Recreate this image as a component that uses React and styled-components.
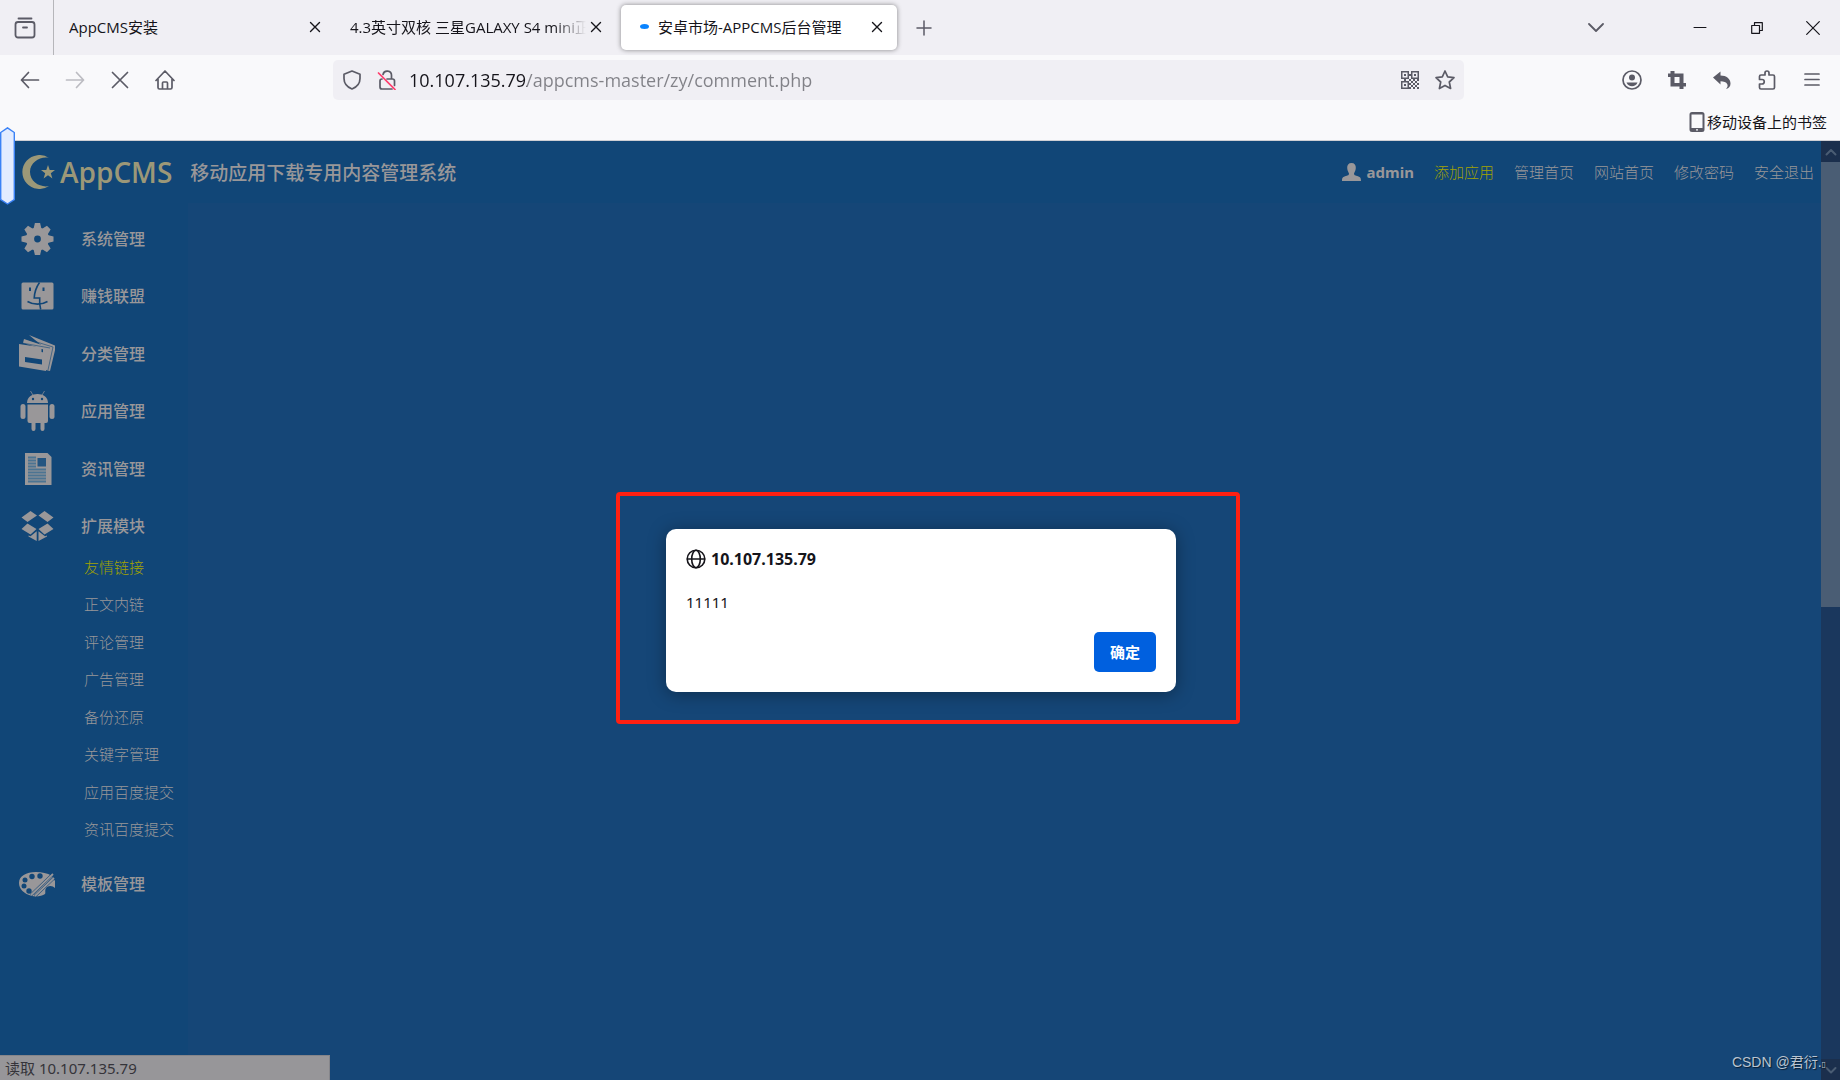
import React from "react";
import styled, { createGlobalStyle } from "styled-components";

const GlobalStyle = createGlobalStyle`
  * {
    box-sizing: border-box;
  }
  body {
    margin: 0;
    font-family: "Noto Sans", "Noto Sans CJK SC", sans-serif;
    color: #15141a;
  }
  button, input {
    font-family: inherit;
  }
`;

const Window = styled.div`
  display: flex;
  flex-direction: column;
  min-height: 100vh;
  background: #f9f9fb;
  position: relative;
`;

/* ---------- tab strip ---------- */
const TabStrip = styled.div`
  display: flex;
  align-items: center;
  height: 55px;
  background: #f0eff4;
`;
const IconButton = styled.button`
  display: flex;
  align-items: center;
  justify-content: center;
  flex: none;
  width: ${(p) => p.$width || 45}px;
  height: 40px;
  padding: 0;
  border: 0;
  background: transparent;
  color: ${(p) => p.$color || "#5b5b66"};
`;
const ViewButton = styled(IconButton)`
  height: 100%;
  padding-right: 3px;
  border-right: 1px solid #b6b6ba;
`;
const Tabs = styled.div`
  display: flex;
  gap: 5px;
  padding-left: 5px;
`;
const Tab = styled.div`
  display: flex;
  align-items: center;
  width: 276px;
  height: 45px;
  padding: 0 10px 2px;
  border-radius: 5px;
  background: ${(p) => (p.$active ? "#ffffff" : "transparent")};
  box-shadow: ${(p) => (p.$active ? "0 0 5px rgba(0, 0, 0, 0.45)" : "none")};
`;
const Loading = styled.span`
  flex: none;
  width: 9px;
  height: 5px;
  margin: 0 9px;
  border-radius: 50%;
  background: #0a84ff;
`;
const TabTitle = styled.span`
  flex: 1;
  overflow: hidden;
  white-space: nowrap;
  font-family: "Open Sans", "Noto Sans CJK SC", sans-serif;
  font-size: 15px;
  line-height: 24px;
  ${(p) =>
    p.$fade &&
    "mask-image: linear-gradient(to left, transparent, #000 32px);"}
`;
const WindowButtons = styled.div`
  display: flex;
  margin-left: auto;
`;

/* ---------- navigation ---------- */
const NavBar = styled.div`
  display: flex;
  align-items: center;
  justify-content: space-between;
  height: 50px;
  padding: 0 6px 0 7px;
`;
const NavGroup = styled.div`
  display: flex;
  flex: 1;
  justify-content: ${(p) => (p.$end ? "flex-end" : "flex-start")};
`;
const UrlBar = styled.label`
  display: flex;
  align-items: center;
  flex: 0 1 1131px;
  height: 40px;
  margin-right: 44px;
  padding: 0 3px 0 1px;
  border-radius: 5px;
  background: #f0eff4;
`;
const UrlInput = styled.input`
  flex: 1;
  min-width: 0;
  padding: 0;
  margin-left: 5px;
  border: 0;
  outline: 0;
  font-family: "Open Sans", sans-serif;
  font-size: 18px;
  line-height: 26px;
  color: transparent;
  background: linear-gradient(to right, #15141a 118px, #818187 118px);
  -webkit-background-clip: text;
  background-clip: text;
`;
const Bookmarks = styled.div`
  display: flex;
  justify-content: flex-end;
  align-items: center;
  height: 36px;
  padding: 0 13px 2px;
  border-bottom: 1px solid #cfcfd4;
`;
const Bookmark = styled.a`
  display: flex;
  align-items: center;
  gap: 2px;
  font-size: 15px;
  line-height: 24px;
  color: #15141a;
  text-decoration: none;
`;

/* ---------- page ---------- */
const Page = styled.div`
  display: flex;
  flex: 1;
  position: relative;
  background: #114677;
  color: #999799;
`;
const Site = styled.div`
  display: flex;
  flex-direction: column;
  flex: 1;
`;
const Header = styled.header`
  display: flex;
  align-items: center;
  height: 62px;
  padding: 0 7px 0 21px;
`;
const Logo = styled.a`
  display: flex;
  align-items: center;
  gap: 4px;
  height: 40px;
  font-family: "Open Sans", sans-serif;
  font-size: 28px;
  font-weight: 600;
  line-height: 40px;
  color: #9c9878;
  text-decoration: none;
`;
const Slogan = styled.span`
  margin-left: 18px;
  padding-top: 2px;
  font-size: 19px;
  font-weight: 500;
  line-height: 28px;
`;
const TopLinks = styled.nav`
  display: flex;
  align-items: center;
  gap: 20px;
  margin-left: auto;
`;
const User = styled.b`
  display: flex;
  align-items: center;
  gap: 6px;
  font-size: 15px;
  line-height: 24px;
`;
const TextLink = styled.a`
  font-size: 15px;
  font-weight: 300;
  line-height: 24px;
  color: ${(p) => (p.$active ? "#a3a300" : "#999799")};
  text-decoration: none;
`;
const Body = styled.div`
  display: flex;
  flex: 1;
`;
const Sidebar = styled.aside`
  width: 188px;
  padding: 7px 0 0 17px;
`;
const Content = styled.main`
  flex: 1;
  background: #154677;
`;
const Menu = styled.nav`
  display: grid;
  grid-auto-rows: 1fr;
  min-height: 345px;
`;
const MenuItem = styled.a`
  display: flex;
  align-items: center;
  gap: 26px;
  min-height: 57px;
  font-size: 16px;
  font-weight: 500;
  line-height: 24px;
  color: #999799;
  text-decoration: none;
`;
const SubMenu = styled.nav`
  display: grid;
  grid-auto-rows: 1fr;
  align-items: center;
  min-height: 300px;
  margin-top: -7px;
  margin-bottom: 7px;
  padding-left: 67px;
`;

/* ---------- scrollbar ---------- */
const Scrollbar = styled.div`
  display: grid;
  grid-template-rows: 21px 445px 1fr 21px;
  width: 19px;
  background: #1a375d;
`;
const ScrollButton = styled.button`
  display: flex;
  align-items: center;
  justify-content: center;
  padding: 0;
  border: 0;
  background: #1b2f4d;
  color: #4a5c73;
`;
const Thumb = styled.div`
  background: #4a5d74;
`;
const Track = styled.div``;

/* ---------- overlays ---------- */
const Overlay = styled.div`
  position: absolute;
  inset: 0;
  display: flex;
  align-items: center;
  justify-content: center;
  padding: 0 0 5px 16px;
`;
const Frame = styled.div`
  padding: 33px 60px 28px 46px;
  border: 4px solid #ff2012;
  border-radius: 4px;
`;
const Dialog = styled.section`
  display: flex;
  flex-direction: column;
  width: 510px;
  padding: 18px 20px 20px;
  border-radius: 10px;
  background: #ffffff;
  color: #15141a;
  box-shadow: 0 2px 18px rgba(0, 0, 0, 0.35);
`;
const DialogTitle = styled.h1`
  display: flex;
  align-items: center;
  gap: 5px;
  margin: 0;
  font-size: 16px;
  font-weight: 700;
  line-height: 24px;
`;
const Message = styled.p`
  margin: 19px 0 18px;
  font-size: 15px;
  line-height: 24px;
`;
const OkButton = styled.button`
  align-self: flex-end;
  width: 62px;
  height: 40px;
  padding: 0 0 2px;
  border: 0;
  border-radius: 5px;
  background: #0060df;
  color: #ffffff;
  font-size: 15px;
  font-weight: 700;
`;
const Handle = styled.div`
  position: absolute;
  top: 127px;
  left: 0;
  width: 15px;
  height: 78px;
`;
const Status = styled.div`
  position: absolute;
  left: 0;
  bottom: 0;
  width: 330px;
  height: 25px;
  padding-left: 5px;
  border: 1px solid #85858a;
  border-left: 0;
  border-bottom: 0;
  background: #979699;
  color: #35343a;
  font-size: 15px;
  line-height: 25px;
`;
const Watermark = styled.span`
  position: absolute;
  right: 14px;
  bottom: 5px;
  font-family: "Liberation Sans", "Noto Sans CJK SC", sans-serif;
  font-size: 14px;
  line-height: 20px;
  color: #b9c4d0;
  text-shadow: 1px 1px 1px rgba(0, 0, 0, 0.6);
`;
const Tofu = styled.span`
  font-family: "DejaVu Sans", sans-serif;
  font-size: 8px;
`;

/* ---------- icons ---------- */
const Line = ({ size = 20, box = 20, width = 1.5, children }) => (
  <svg
    width={size}
    height={size}
    viewBox={`0 0 ${box} ${box}`}
    fill="none"
    stroke="currentColor"
    strokeWidth={width}
    strokeLinecap="round"
    strokeLinejoin="round"
    aria-hidden="true"
  >
    {children}
  </svg>
);
const Solid = ({ w = 38, h = 38, box = "0 0 38 38", children }) => (
  <svg width={w} height={h} viewBox={box} fill="currentColor" aria-hidden="true">
    {children}
  </svg>
);

const CloseIcon = () => (
  <Line size={12} box={12} width={1.4}>
    <path d="M1.5 1.5l9 9M10.5 1.5l-9 9" />
  </Line>
);

const QrIcon = () => (
  <Solid w={18} h={18} box="0 0 18 18">
    <path
      fillRule="evenodd"
      d="M0 0h8v8H0zM1.500 1.500v5h5v-5zM3 3h2v2H3zM10 0h8v8h-8zM11.500 1.500v5h5v-5zM13 3h2v2h-2zM0 10h8v8H0zM1.500 11.500v5h5v-5zM3 13h2v2H3z"
    />
    <path d="M8 3h2v2H8zM3 8h2v2H3zM8 8h2v2H8zM10 10h2v2h-2zM12 8h2v2h-2zM14 10h2v2h-2zM16 8h2v2h-2zM12 12h2v2h-2zM10 14h2v2h-2zM14 14h2v2h-2zM16 12h2v2h-2zM12 16h2v2h-2zM16 16h2v2h-2zM8 16h2v2H8zM8 12h2v2H8z" />
  </Solid>
);

const LogoMark = () => (
  <Solid w={35} h={34} box="0 0 35 34">
    <path d="M28 3A17 17 0 1 0 28 31C20 33 9 27 9 17S20 1 28 3Z" />
    <path d="M27 10l1.700 5H34l-4.200 3.200 1.600 5.200L27 20.300l-4.400 3.100 1.600-5.200L20 15h5.300z" />
  </Solid>
);

const GearIcon = () => (
  <Solid>
    <g transform="translate(20.5 19)">
      {[0, 45, 90, 135].map((a) => (
        <path
          key={a}
          transform={`rotate(${a})`}
          d="M-2.600-16h5.200L4-10V10L2.600 16h-5.200L-4 10V-10Z"
        />
      ))}
      <circle r="11.500" />
      <circle r="3.400" fill="#114677" />
    </g>
  </Solid>
);
const FinderIcon = () => (
  <Solid>
    <rect x="4.500" y="5.500" width="32" height="27" rx="1.500" />
    <g fill="none" stroke="#114677" strokeWidth="1.600">
      <path d="M22.500 5.500C19 10.500 17.500 15.500 17.200 21h5.500c-.3 4 0 8 1 11.500" />
      <path d="M10.500 24.500c6 3.500 14 3.500 20 0" />
      <path d="M13 10.500v3.500M26.500 10.500v3.500" strokeWidth="2" />
    </g>
  </Solid>
);
const CardsIcon = () => (
  <Solid>
    <path d="M12 0l27 11-6 25-4-1V14z" />
    <path d="M7 4l27 9-5 22-3-1V14L6 8z" />
    <path
      fillRule="evenodd"
      d="M2 9l30 4.500L29 36 2 31.500zM8 22v5l17 2.500v-5zM24.500 14v3l5 1v-3z"
    />
    <path d="M10 4l26 8-5 23M5 8l28 5" fill="none" stroke="#114677" strokeWidth=".6" />
  </Solid>
);
const AndroidIcon = () => (
  <Solid w={38} h={40} box="0 0 38 40">
    <path d="M10 12C10 6 15 3 20.500 3S31 6 31 12z" />
    <path d="M13.500 0l3 5M27.500 0l-3 5" stroke="currentColor" strokeWidth=".7" />
    <path d="M10.500 13.500H31V30a2 2 0 0 1-2 2h-1.500v6a2 2 0 0 1-4 0v-6h-5v6a2 2 0 0 1-4 0v-6h-2a2 2 0 0 1-2-2z" />
    <rect x="3.500" y="13" width="5" height="15" rx="2.500" />
    <rect x="32.500" y="13" width="5" height="15" rx="2.500" />
    <circle cx="16" cy="8" r="1.200" fill="#114677" />
    <circle cx="25" cy="8" r="1.200" fill="#114677" />
  </Solid>
);
const NewsIcon = () => (
  <Solid>
    <path d="M8 3h22.500l4 4v28H8z" />
    <path d="M20.500 8H29v8.500h-8.500z" fill="#235581" />
    <path
      d="M11 7.500h8M11 10.500h8M11 13.500h8M11 16.500h8M11 19.500h18M11 22.500h18M11 25.500h18M11 28.500h18M11 31.500h18"
      stroke="#4c7492"
      strokeWidth="1.800"
    />
  </Solid>
);
const BoxIcon = () => (
  <Solid>
    <path d="M13.500 4l6.500 4.500L10.500 15 4.500 10.500zM27.500 4l9 6.500-6 4.500L21.500 8.500zM10.500 16.500L19.500 22l-6 5.500-9-5.500zM30.500 16.500l6 5.500-9 5.500-6-5.500z" />
    <path d="M11.500 28.500l2 .8 6.200-5V34l-8.200-4.500zM30 28.500l-2 .8-6.500-5V34l8.500-4.500z" />
  </Solid>
);
const PaletteIcon = () => (
  <Solid>
    <path d="M35 11l3 5v7c-2-2-5-3-8-1-3 3-1 5-2 7-3 2-8 3-13 2C7 29 2 24 2 18 2 11 9 7 19 7c6 0 11 1 16 4z" />
    <g fill="#114677">
      <circle cx="15" cy="11.500" r="2.700" />
      <circle cx="23" cy="11" r="2.700" />
      <circle cx="8" cy="15" r="2.500" />
      <circle cx="7" cy="21" r="2.500" />
      <circle cx="12" cy="26" r="2.700" />
    </g>
    <path d="M14 30L36 9M18 31l19-18" stroke="#114677" strokeWidth="3" />
    <path d="M14 30L36 9M18 31l19-18" stroke="currentColor" strokeWidth="1.800" />
  </Solid>
);

const menu = [
  { label: "系统管理", icon: <GearIcon /> },
  { label: "赚钱联盟", icon: <FinderIcon /> },
  { label: "分类管理", icon: <CardsIcon /> },
  { label: "应用管理", icon: <AndroidIcon /> },
  { label: "资讯管理", icon: <NewsIcon /> },
  { label: "扩展模块", icon: <BoxIcon /> },
];
const subMenu = [
  "友情链接",
  "正文内链",
  "评论管理",
  "广告管理",
  "备份还原",
  "关键字管理",
  "应用百度提交",
  "资讯百度提交",
];
const topLinks = ["添加应用", "管理首页", "网站首页", "修改密码", "安全退出"];

const TabClose = () => (
  <IconButton $width={20} $color="#15141a" aria-label="关闭"><CloseIcon /></IconButton>
);

const BrowserTabs = () => (
  <TabStrip>
    <ViewButton $width={54} aria-label="Firefox View">
      <Line size={22} box={22} width={1.8}>
        <path d="M4.500 1.500h13" />
        <rect x="1.500" y="5" width="19" height="15.500" rx="2.500" />
        <path d="M9 10.500h4" />
      </Line>
    </ViewButton>
    <Tabs>
      <Tab>
        <TabTitle>AppCMS安装</TabTitle>
        <TabClose />
      </Tab>
      <Tab>
        <TabTitle $fade>4.3英寸双核 三星GALAXY S4 mini正</TabTitle>
        <TabClose />
      </Tab>
      <Tab $active>
        <Loading />
        <TabTitle>安卓市场-APPCMS后台管理</TabTitle>
        <TabClose />
      </Tab>
    </Tabs>
    <IconButton $width={54} aria-label="新标签页">
      <Line size={16} box={16}><path d="M8 1v14M1 8h14" /></Line>
    </IconButton>
    <WindowButtons>
      <IconButton $width={150} aria-label="列出标签页">
        <Line size={16} box={16} width={1.8}><path d="M1 4l7 7 7-7" /></Line>
      </IconButton>
      <IconButton $width={57} $color="#15141a" aria-label="最小化">
        <Line size={14} box={14} width={1}><path d="M1 6.500h12" /></Line>
      </IconButton>
      <IconButton $width={57} $color="#15141a" aria-label="还原">
        <Line size={12} box={12} width={1.2}>
          <path d="M.7 3.500h7.800v7.800H.7zM3.500 3V.7h7.800v7.800H9" />
        </Line>
      </IconButton>
      <IconButton $width={55} $color="#15141a" aria-label="关闭窗口">
        <Line size={14} box={14} width={1.2}><path d="M.7.7l12.600 12.600M13.300.7L.7 13.300" /></Line>
      </IconButton>
    </WindowButtons>
  </TabStrip>
);

const Navigation = () => (
  <NavBar>
    <NavGroup>
      <IconButton aria-label="后退">
        <Line width={1.7}><path d="M18.500 10h-17M8.500 2.500L1.500 10l7 7.500" /></Line>
      </IconButton>
      <IconButton $color="#bcbcc2" aria-label="前进">
        <Line width={1.7}><path d="M1.500 10h17M11.500 2.500l7 7.500-7 7.500" /></Line>
      </IconButton>
      <IconButton aria-label="停止">
        <Line width={1.7}><path d="M2.500 2.500l15 15M17.500 2.500l-15 15" /></Line>
      </IconButton>
      <IconButton aria-label="主页">
        <Line width={1.7}>
          <path d="M1 10.500L10 1l9 9.500M3 9v8.500a1.500 1.500 0 0 0 1.500 1.500h11a1.500 1.500 0 0 0 1.500-1.500V9M7.500 19v-6a1 1 0 0 1 1-1h3a1 1 0 0 1 1 1v6" />
        </Line>
      </IconButton>
    </NavGroup>
    <UrlBar>
      <IconButton as="span" $width={35}>
        <Line width={1.7}>
          <path d="M10 1l8 3.300v4.200c0 4.500-3 8.500-8 10.500-5-2-8-6-8-10.500V4.300z" />
        </Line>
      </IconButton>
      <IconButton as="span" $width={35}>
        <Line width={1.7}>
          <path d="M6 4.500a4.300 4.300 0 0 1 8.500 1V9M5 9v0a2 2 0 0 0-2 2v6a2 2 0 0 0 2 2h10M10 9h5.500a2 2 0 0 1 2 2v4.500" />
          <path d="M1.500 3l16.500 16.500" stroke="#ff3b6b" />
        </Line>
      </IconButton>
      <UrlInput
        type="text"
        aria-label="地址"
        defaultValue="10.107.135.79/appcms-master/zy/comment.php"
      />
      <IconButton $width={36} aria-label="二维码"><QrIcon /></IconButton>
      <IconButton $width={33} aria-label="收藏">
        <Line width={1.7}>
          <path d="M10 1l2.700 5.900 6.300.8-4.700 4.300 1.300 6.500L10 15.400l-5.600 3.100L5.700 12 1 7.700l6.300-.8z" />
        </Line>
      </IconButton>
    </UrlBar>
    <NavGroup $end>
      <IconButton aria-label="账户">
        <Line width={1.7}>
          <circle cx="10" cy="10" r="9" />
          <circle cx="10" cy="7.500" r="3" fill="currentColor" stroke="none" />
          <path d="M4.500 12.500h11c-1 2.500-3 3.700-5.500 3.700s-4.500-1.200-5.500-3.700z" fill="currentColor" stroke="none" />
        </Line>
      </IconButton>
      <IconButton aria-label="截图">
        <Solid w={18} h={18} box="0 0 18 18">
          <path
            fillRule="evenodd"
            d="M2.500 0h4v2.500h9V12H18v3.500h-2.500V18h-4v-2.500h-9V6H0V2.500h2.500zM6.500 6v6h5V6z"
          />
        </Solid>
      </IconButton>
      <IconButton aria-label="撤销">
        <Solid w={18} h={18} box="0 0 18 18">
          <path d="M0 6.500L7.500.5v4C13.500 4.500 17.500 8 17.500 12.500c0 2.700-1.500 4.700-4.500 5.500 1.500-1.500 2-3 1.300-4.700-1-2.300-3.500-3-6.800-3v3.200z" />
        </Solid>
      </IconButton>
      <IconButton aria-label="扩展">
        <Line width={1.7}>
          <path d="M2.500 8V6.500A1.500 1.500 0 0 1 4 5h4V3a2 2 0 0 1 4 0v2h4a1.500 1.500 0 0 1 1.500 1.500v11A1.500 1.500 0 0 1 16 19H4a1.500 1.500 0 0 1-1.500-1.500V14H5a2 2 0 0 0 0-4.500H2.500z" />
        </Line>
      </IconButton>
      <IconButton aria-label="菜单">
        <Line size={16} box={16} width={1.7}><path d="M1 2h14M1 7.500h14M1 13h14" /></Line>
      </IconButton>
    </NavGroup>
  </NavBar>
);

const Alert = () => (
  <Overlay>
    <Frame>
      <Dialog role="alertdialog" aria-labelledby="alert-title">
        <DialogTitle id="alert-title">
          <Line width={1.6}>
            <circle cx="10" cy="10" r="8.800" />
            <ellipse cx="10" cy="10" rx="4.300" ry="8.800" />
            <path d="M1.500 10h17" />
          </Line>
          10.107.135.79
        </DialogTitle>
        <Message>11111</Message>
        <OkButton>确定</OkButton>
      </Dialog>
    </Frame>
  </Overlay>
);

const App = () => {
  return (
    <Window>
      <GlobalStyle />
      <BrowserTabs />
      <Navigation />
      <Bookmarks>
        <Bookmark href="#">
          <Solid w={16} h={20} box="0 0 16 20">
            <path
              fill="#5b5b66"
              fillRule="evenodd"
              d="M3 0h10a2.500 2.500 0 0 1 2.500 2.500v15A2.500 2.500 0 0 1 13 20H3a2.500 2.500 0 0 1-2.500-2.500v-15A2.500 2.500 0 0 1 3 0zM2.500 2.500V16h11V2.500zM7 17.300v1.200h2v-1.200z"
            />
          </Solid>
          移动设备上的书签
        </Bookmark>
      </Bookmarks>
      <Page>
        <Site>
          <Header>
            <Logo href="#"><LogoMark />AppCMS</Logo>
            <Slogan>移动应用下载专用内容管理系统</Slogan>
            <TopLinks>
              <User>
                <Solid w={19} h={18} box="0 0 19 18">
                  <path d="M9.500 0c3 0 4.500 2 4.300 5-.2 3-1.300 4-1.800 5.500 0 1.500 1 2 3 2.500 3 .8 4 1.500 4 5H0c0-3.500 1-4.200 4-5 2-.5 3-1 3-2.500C6.500 9 5.400 8 5.200 5 5 2 6.500 0 9.500 0z" />
                </Solid>
                admin
              </User>
              {topLinks.map((t, i) => (
                <TextLink key={t} href="#" $active={i === 0}>{t}</TextLink>
              ))}
            </TopLinks>
          </Header>
          <Body>
            <Sidebar>
              <Menu>
                {menu.map((m) => (
                  <MenuItem key={m.label} href="#">{m.icon}{m.label}</MenuItem>
                ))}
              </Menu>
              <SubMenu>
                {subMenu.map((t, i) => (
                  <TextLink key={t} href="#" $active={i === 0}>{t}</TextLink>
                ))}
              </SubMenu>
              <MenuItem href="#"><PaletteIcon />模板管理</MenuItem>
            </Sidebar>
            <Content />
          </Body>
        </Site>
        <Scrollbar>
          <ScrollButton aria-label="向上滚动">
            <Line size={12} box={12} width={2}><path d="M1.500 8.500L6 4l4.500 4.500" /></Line>
          </ScrollButton>
          <Thumb />
          <Track />
          <ScrollButton aria-label="向下滚动">
            <Line size={12} box={12} width={2}><path d="M1.500 4L6 8.500 10.500 4" /></Line>
          </ScrollButton>
        </Scrollbar>
        <Alert />
        <Status>读取 10.107.135.79</Status>
        <Watermark>CSDN @君衍.<Tofu>▯</Tofu></Watermark>
      </Page>
      <Handle>
        <svg width="15" height="78" viewBox="0 0 15 78" aria-hidden="true">
          <path d="M.7 5.500L7.500.8l6.800 4.700v67L7.500 77 .7 72.500z" fill="#e3ecff" stroke="#3b82f6" strokeWidth="1.400" />
        </svg>
      </Handle>
    </Window>
  );
};

export default App;
